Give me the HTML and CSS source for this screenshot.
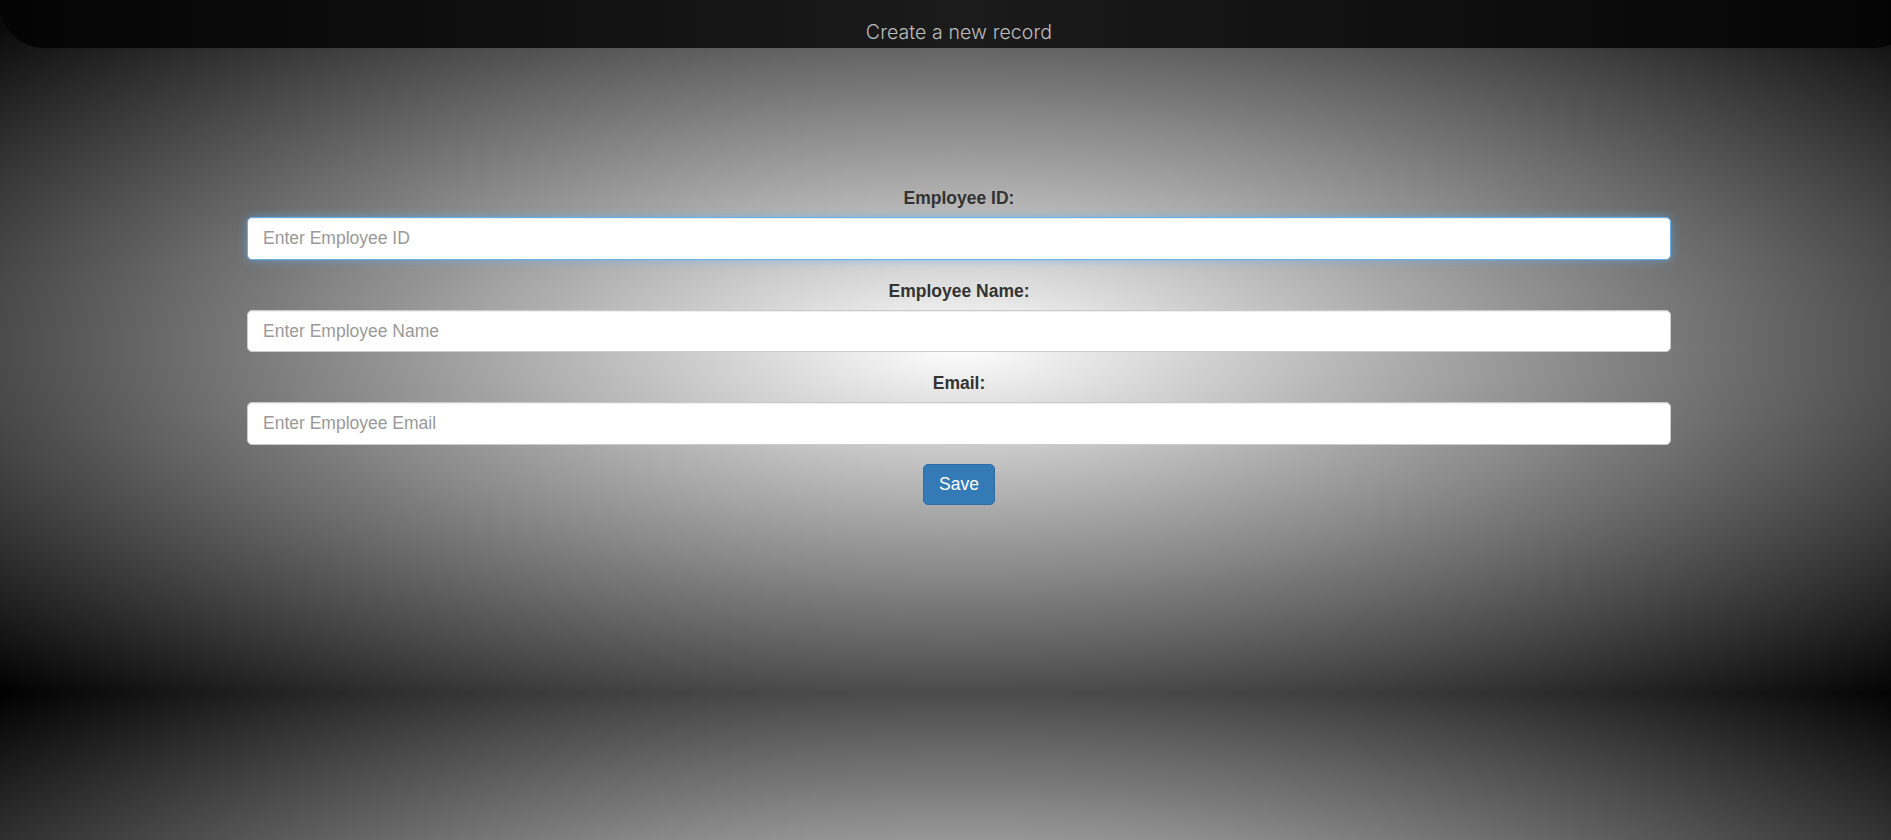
FILE: index.html
```html
<!DOCTYPE html>
<html lang="en">
<head>
<meta charset="utf-8">
<title>Create a new record</title>
<link rel="stylesheet" href="styles.css">
</head>
<body>
<div class="page">
  <header class="topbar">
    <h1 class="topbar-title">Create a new record</h1>
  </header>
  <main class="content">
    <form class="record-form">
      <div class="form-group">
        <label class="form-label" for="empId">Employee ID:</label>
        <input class="form-control is-focus" id="empId" type="text" placeholder="Enter Employee ID" autofocus>
      </div>
      <div class="form-group">
        <label class="form-label" for="empName">Employee Name:</label>
        <input class="form-control" id="empName" type="text" placeholder="Enter Employee Name">
      </div>
      <div class="form-group">
        <label class="form-label" for="empEmail">Email:</label>
        <input class="form-control" id="empEmail" type="text" placeholder="Enter Employee Email">
      </div>
      <div class="form-actions">
        <button class="btn-primary" type="button">Save</button>
      </div>
    </form>
  </main>
</div>
</body>
</html>
```
FILE: styles.css
```css
html {
  margin: 0;
  padding: 0;
  overflow: hidden;
  background-color: #000;
  background-image: radial-gradient(ellipse at center, #ffffff 0%, #000000 100%);
  background-size: 1918px 693px;
  background-repeat: repeat;
  background-position: 0 0;
}

body {
  margin: 0;
  padding: 0;
  font-family: "Liberation Sans", Arial, Helvetica, sans-serif;
  font-size: 17.5px;
  line-height: 1.42857;
  color: #333;
  overflow: hidden;
}

.page {
  width: calc(100% + 27px);
  min-height: 840px;
}

.topbar {
  height: 48px;
  box-sizing: border-box;
  padding-top: 20px;
  background: linear-gradient(90deg, #040404 0%, #0f0f0f 25%, #1b1b1b 50%, #0f0f0f 75%, #040404 100%);
  border-radius: 0 0 44px 44px;
  text-align: center;
}

.topbar-title {
  margin: 0;
  font-family: Inter, "Open Sans", sans-serif;
  font-weight: 300;
  font-size: 19.5px;
  line-height: 24px;
  color: #bdbdbd;
  letter-spacing: 0.1px;
}

.content {
  padding-top: 138px;
}

.record-form {
  max-width: 1424px;
  margin: 0 auto;
}

.form-group {
  margin-bottom: 18.75px;
  text-align: center;
}

.form-label {
  display: block;
  margin-bottom: 6.25px;
  font-weight: 700;
  font-size: 17.5px;
  line-height: 25px;
  color: #333;
}

.form-control {
  display: block;
  width: 100%;
  height: 42.5px;
  box-sizing: border-box;
  padding: 7.5px 15px;
  font-family: "Liberation Sans", Arial, Helvetica, sans-serif;
  font-size: 17.5px;
  line-height: 1.42857;
  color: #555;
  background-color: #fff;
  border: 1px solid #ccc;
  border-radius: 5px;
  box-shadow: inset 0 1px 1px rgba(0, 0, 0, 0.075);
  outline: none;
}

.form-control::placeholder {
  color: #999;
  opacity: 1;
}

.form-control.is-focus,
.form-control:focus {
  border-color: #66afe9;
  box-shadow: inset 0 1px 1px rgba(0, 0, 0, 0.075), 0 0 10px rgba(102, 175, 233, 0.6);
}

.form-actions {
  text-align: center;
}

.btn-primary {
  display: inline-block;
  padding: 7.5px 15px;
  font-family: "Liberation Sans", Arial, Helvetica, sans-serif;
  font-size: 17.5px;
  line-height: 1.42857;
  color: #fff;
  background-color: #337ab7;
  border: 1px solid #2e6da4;
  border-radius: 5px;
  cursor: pointer;
}
```
